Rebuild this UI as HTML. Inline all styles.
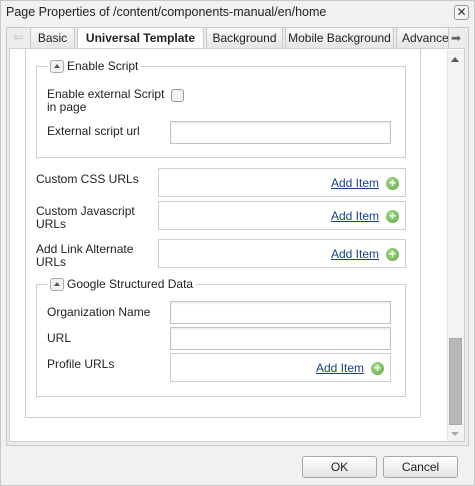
<!DOCTYPE html>
<html><head><style>
*{box-sizing:border-box;margin:0;padding:0}
body{width:475px;height:486px;background:#f1f1f1;font-family:"Liberation Sans",sans-serif;font-size:12px;color:#222;position:relative;overflow:hidden}
.a{position:absolute}
.tab{position:absolute;top:27px;height:21px;border:1px solid #c8c8c8;border-bottom:none;background:linear-gradient(#f8f8f8,#e6e6e6);text-align:center;line-height:20px;color:#222;border-radius:3px 3px 0 0}
.inp{position:absolute;border:1px solid #c4c4c4;background:#fff;box-shadow:inset 0 1px 2px #e4e4e4}
.box{position:absolute;border:1px solid #cfcfcf;background:#fff}
.add{position:absolute;right:6px;top:7px;color:#15428b;font-size:12px;display:flex;align-items:center}
.add u{text-decoration:underline}
.plus{display:inline-block;width:13px;height:13px;border-radius:50%;background:radial-gradient(circle at 40% 35%,#a8dc8e,#5aa83c);color:#fff;font-weight:bold;font-size:12px;line-height:13px;text-align:center;margin-left:7px}
.fs{position:absolute;border:1px solid #cfcfcf}
.leg{position:absolute;background:#fff;padding:0 3px 0 2px;white-space:nowrap;display:flex;align-items:center}
.tog{display:inline-block;width:14px;height:13px;border:1px solid #aaa;border-radius:3px;background:#f2f2f2;margin-right:3px;position:relative}
.tog:after{content:"";position:absolute;left:3px;top:3px;border:3px solid transparent;border-bottom:4px solid #555;border-top:none}
.btn{position:absolute;top:456px;height:22px;border:1px solid #a8a8a8;border-radius:3px;background:linear-gradient(#fdfdfd,#e4e4e4);text-align:center;line-height:20px}
</style></head><body>
<div class="a" style="left:0;top:0;width:475px;height:486px;border:1px solid #c8c8c8"></div>
<div class="a" style="left:6px;top:5px;font-size:12.5px">Page Properties of /content/components-manual/en/home</div>
<div class="a" style="left:454px;top:5px;width:15px;height:15px;border:1px solid #999;border-radius:3px;background:#f6f6f6;text-align:center;line-height:13px;font-size:12px;color:#333">✕</div>
<div class="a" style="left:6px;top:27px;width:463px;height:419px;border:1px solid #c8c8c8;background:#ececec"></div>
<div class="a" style="left:8px;top:27px;width:20px;height:21px;color:#bbb;text-align:center;line-height:21px;font-size:12px">⇦</div>
<div class="tab" style="left:30px;width:45px">Basic</div>
<div class="tab" style="left:77px;width:127px;height:22px;background:#fff;font-weight:bold">Universal Template</div>
<div class="tab" style="left:206px;width:77px">Background</div>
<div class="tab" style="left:285px;width:109px">Mobile Background</div>
<div class="tab" style="left:396px;width:53px;text-align:left;padding-left:5px;overflow:hidden">Advance</div>
<div class="a" style="left:448px;top:28px;width:16px;height:20px;color:#666;text-align:center;line-height:20px;font-size:12px">➡</div>
<div class="a" style="left:9px;top:48px;width:456px;height:394px;background:#fff;border:1px solid #d0d0d0"></div>
<div class="a" style="left:447px;top:50px;width:17px;height:391px;background:#f3f3f3;border-left:1px solid #e4e4e4"></div>
<div class="a" style="left:451px;top:57px;border:4px solid transparent;border-bottom:5px solid #555;border-top:none"></div>
<div class="a" style="left:449px;top:338px;width:13px;height:87px;background:#b8b8b8;border:1px solid #a8a8a8"></div>
<div class="a" style="left:451px;top:432px;border:4px solid transparent;border-top:4px solid #aaa;border-bottom:none"></div>
<div class="a" style="left:25px;top:48px;width:396px;height:370px;border:1px solid #cfcfcf;border-top:none"></div>

<div class="fs" style="left:36px;top:66px;width:370px;height:92px"></div>
<div class="leg" style="left:48px;top:59px"><span class="tog"></span>Enable Script</div>
<div class="a" style="left:47px;top:88px;line-height:13px">Enable external Script<br>in page</div>
<div class="a" style="left:171px;top:89px;width:13px;height:13px;border:1px solid #999;border-radius:3px;background:#f4f4f4"></div>
<div class="a" style="left:47px;top:124px">External script url</div>
<div class="inp" style="left:170px;top:121px;width:221px;height:23px"></div>

<div class="a" style="left:36px;top:172px">Custom CSS URLs</div>
<div class="box" style="left:158px;top:168px;width:248px;height:29px"><span class="add"><u>Add Item</u><span class="plus">+</span></span></div>
<div class="a" style="left:36px;top:205px;line-height:13px">Custom Javascript<br>URLs</div>
<div class="box" style="left:158px;top:201px;width:248px;height:29px"><span class="add"><u>Add Item</u><span class="plus">+</span></span></div>
<div class="a" style="left:36px;top:243px;line-height:13px">Add Link Alternate<br>URLs</div>
<div class="box" style="left:158px;top:239px;width:248px;height:29px"><span class="add"><u>Add Item</u><span class="plus">+</span></span></div>

<div class="fs" style="left:36px;top:284px;width:370px;height:113px"></div>
<div class="leg" style="left:48px;top:277px"><span class="tog"></span>Google Structured Data</div>
<div class="a" style="left:47px;top:305px">Organization Name</div>
<div class="inp" style="left:170px;top:301px;width:221px;height:23px"></div>
<div class="a" style="left:47px;top:331px">URL</div>
<div class="inp" style="left:170px;top:327px;width:221px;height:23px"></div>
<div class="a" style="left:47px;top:357px">Profile URLs</div>
<div class="box" style="left:170px;top:353px;width:221px;height:29px"><span class="add"><u>Add Item</u><span class="plus">+</span></span></div>

<div class="btn" style="left:302px;width:75px">OK</div>
<div class="btn" style="left:383px;width:75px">Cancel</div>
</body></html>
